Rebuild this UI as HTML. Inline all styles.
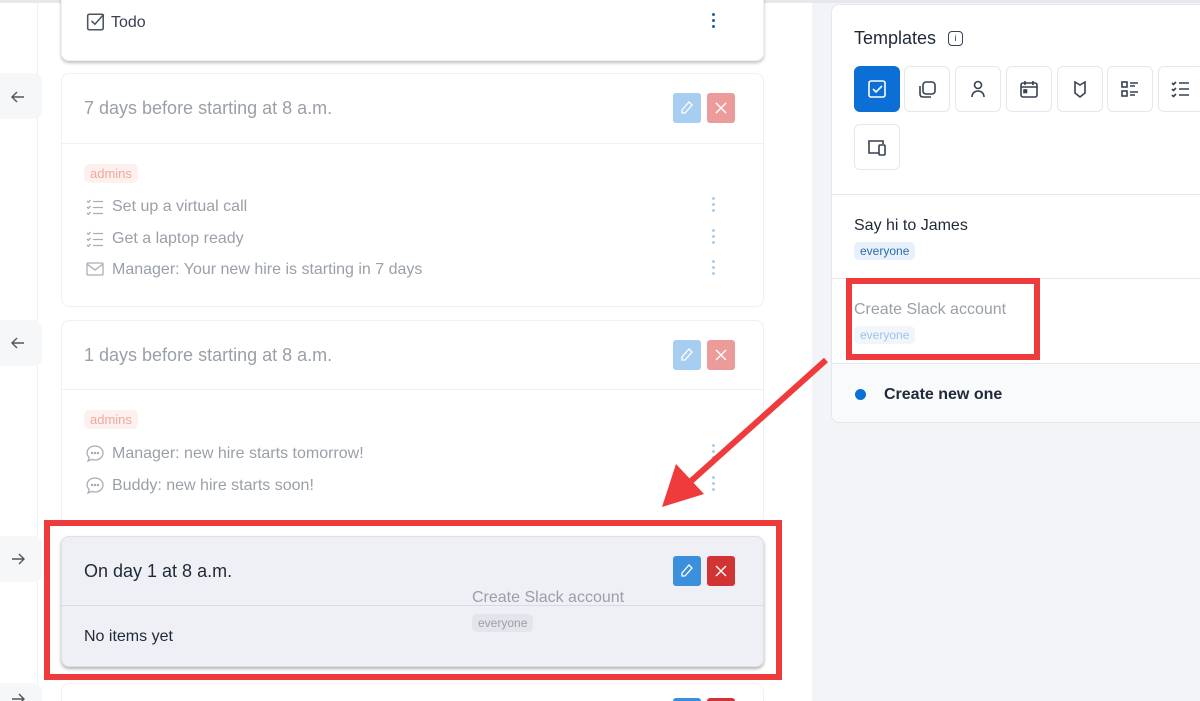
<!DOCTYPE html>
<html><head><meta charset="utf-8"><style>
*{box-sizing:border-box;margin:0;padding:0}
html,body{width:1200px;height:701px;overflow:hidden}
body{background:#fff;font-family:"Liberation Sans",sans-serif;position:relative;color:#1f2937}
.abs{position:absolute}
.card{position:absolute;left:61px;width:703px;background:#fff;border:1px solid #eef0f3;border-radius:8px}
.tab{position:absolute;left:0;width:42px;height:46px;background:#f6f7f9;border-radius:0 8px 8px 0}
.txt{position:absolute;font-size:16px}
.faded{color:#9aa0a8}
.dots{position:absolute;left:712px;width:4px}
.dots i{display:block;width:3px;height:3px;border-radius:50%;background:#a9cdea;margin-bottom:3px}
.btn{position:absolute;width:28px;height:30px;border-radius:3px}
.badge{position:absolute;font-size:13px;padding:2px 6px;border-radius:5px}
.ib{position:absolute;width:46px;height:46px;border:1px solid #e5e7eb;border-radius:6px;background:#fff;display:flex;align-items:center;justify-content:center}
.ico{position:absolute}
</style></head><body>
<svg width="0" height="0" style="position:absolute">
<defs>
<g id="la"><path d="M15 9H3M8 4L3 9l5 5" fill="none" stroke="#555" stroke-width="1.4"/></g>
<g id="ra"><path d="M3 9h12M10 4l5 5-5 5" fill="none" stroke="#555" stroke-width="1.4"/></g>
<g id="cl" fill="none" stroke="#a9aeb5" stroke-width="1.3"><path d="M1 3l1.3 1.3L4.5 2M1 9l1.3 1.3L4.5 8M1 15l1.3 1.3L4.5 14M7 3.5h10M7 9.5h10M7 15.5h10"/></g>
<g id="ml" fill="none" stroke="#a9aeb5" stroke-width="1.3"><rect x="1" y="3" width="16" height="12" rx="1"/><path d="M1 4l8 6 8-6"/></g>
<g id="ch" fill="none" stroke="#a9aeb5" stroke-width="1.3"><path d="M9 2c4.5 0 8 3 8 7s-3.5 7-8 7c-1.2 0-2.3-.2-3.3-.6L2 17l1.2-3.4C2 12.3 1 10.7 1 9c0-4 3.5-7 8-7z"/><circle cx="6" cy="9" r=".6" fill="#a9aeb5"/><circle cx="9" cy="9" r=".6" fill="#a9aeb5"/><circle cx="12" cy="9" r=".6" fill="#a9aeb5"/></g>
<g id="pen" fill="none" stroke="#fff" stroke-width="1.3"><path d="M10 2l3 3-7 8H3v-3z"/></g>
<g id="x" fill="none" stroke="#fff" stroke-width="1.4"><path d="M3 3l10 10M13 3L3 13"/></g>
</defs></svg>
<div class="abs" style="left:0;top:0;width:1200px;height:3px;background:#e6e8ec"></div>
<div class="abs" style="left:37px;top:3px;width:1px;height:698px;background:#f0f1f4"></div>
<div class="abs" style="left:812px;top:3px;width:388px;height:698px;background:#f3f4f8"></div>

<!-- card 1 -->
<div class="card" style="top:-10px;height:71px;box-shadow:0 2px 3px rgba(0,0,0,.25)"></div>
<svg class="abs" style="left:86px;top:12px" width="20" height="20" viewBox="0 0 18 18" fill="none" stroke="#4b5563" stroke-width="1.4"><rect x="1.5" y="2" width="14" height="14" rx="1.5"/><path d="M5 8l3 3 8-9"/></svg>
<div class="txt" style="left:111px;top:14px;color:#374151">Todo</div>
<div class="dots" style="top:13px"><i style="background:#1e5fa8"></i><i style="background:#1e5fa8"></i><i style="background:#1e5fa8"></i></div>

<!-- card 2 -->
<div class="tab" style="top:73px"></div>
<svg class="ico" style="left:9px;top:88px" width="18" height="18"><use href="#la"/></svg>
<div class="card" style="top:73px;height:234px"></div>
<div class="abs" style="left:61px;top:143px;width:703px;height:1px;background:#eef0f3"></div>
<div class="txt faded" style="left:84px;top:98px;font-size:18px">7 days before starting at 8 a.m.</div>
<div class="btn" style="left:673px;top:93px;background:#a7cdf0"></div>
<div class="btn" style="left:707px;top:93px;background:#ec9b9b"></div>
<svg class="ico" style="left:679px;top:100px" width="16" height="16"><use href="#pen"/></svg>
<svg class="ico" style="left:713px;top:100px" width="16" height="16"><use href="#x"/></svg>
<div class="badge" style="left:84px;top:164px;background:#fdf1ef;color:#f0a899">admins</div>
<svg class="ico" style="left:86px;top:198px" width="18" height="18"><use href="#cl"/></svg>
<svg class="ico" style="left:86px;top:230px" width="18" height="18"><use href="#cl"/></svg>
<svg class="ico" style="left:86px;top:260px" width="18" height="18"><use href="#ml"/></svg>
<div class="txt faded" style="left:112px;top:198px">Set up a virtual call</div>
<div class="txt faded" style="left:112px;top:230px">Get a laptop ready</div>
<div class="txt faded" style="left:112px;top:261px">Manager: Your new hire is starting in 7 days</div>
<div class="dots" style="top:197px"><i></i><i></i><i></i></div>
<div class="dots" style="top:229px"><i></i><i></i><i></i></div>
<div class="dots" style="top:260px"><i></i><i></i><i></i></div>

<!-- card 3 -->
<div class="tab" style="top:320px"></div>
<svg class="ico" style="left:9px;top:334px" width="18" height="18"><use href="#la"/></svg>
<div class="card" style="top:320px;height:205px"></div>
<div class="abs" style="left:61px;top:389px;width:703px;height:1px;background:#eef0f3"></div>
<div class="txt faded" style="left:84px;top:345px;font-size:18px">1 days before starting at 8 a.m.</div>
<div class="btn" style="left:673px;top:340px;background:#a7cdf0"></div>
<div class="btn" style="left:707px;top:340px;background:#ec9b9b"></div>
<svg class="ico" style="left:679px;top:347px" width="16" height="16"><use href="#pen"/></svg>
<svg class="ico" style="left:713px;top:347px" width="16" height="16"><use href="#x"/></svg>
<div class="badge" style="left:84px;top:410px;background:#fdf1ef;color:#f0a899">admins</div>
<svg class="ico" style="left:86px;top:444px" width="18" height="18"><use href="#ch"/></svg>
<svg class="ico" style="left:86px;top:476px" width="18" height="18"><use href="#ch"/></svg>
<div class="txt faded" style="left:112px;top:445px">Manager: new hire starts tomorrow!</div>
<div class="txt faded" style="left:112px;top:477px">Buddy: new hire starts soon!</div>
<div class="dots" style="top:444px"><i></i><i></i><i></i></div>
<div class="dots" style="top:476px"><i></i><i></i><i></i></div>

<!-- red box + card 4 -->
<div class="abs" style="left:44px;top:520px;width:738px;height:160px;border:6px solid #ef3b3b;background:#fff"></div>
<div class="tab" style="top:536px"></div>
<svg class="ico" style="left:9px;top:550px" width="18" height="18"><use href="#ra"/></svg>
<div class="card" style="top:536px;height:131px;background:#eef0f5;border-color:#dde0e6;box-shadow:0 2px 3px rgba(0,0,0,.3)"></div>
<div class="abs" style="left:61px;top:605px;width:703px;height:1px;background:#d8dce2"></div>
<div class="txt" style="left:84px;top:561px;font-size:18px;color:#1f2937">On day 1 at 8 a.m.</div>
<div class="btn" style="left:673px;top:556px;background:#3b8fdc"></div>
<div class="btn" style="left:707px;top:556px;background:#d23434"></div>
<svg class="ico" style="left:679px;top:563px" width="16" height="16"><use href="#pen"/></svg>
<svg class="ico" style="left:713px;top:563px" width="16" height="16"><use href="#x"/></svg>
<div class="txt" style="left:84px;top:628px;color:#1f2937">No items yet</div>
<div class="txt" style="left:472px;top:589px;color:#9aa0a8">Create Slack account</div>
<div class="badge" style="left:472px;top:614px;background:#e3e5ea;color:#9aa0a8;font-size:12px">everyone</div>

<div class="tab" style="top:683px"></div>
<svg class="ico" style="left:9px;top:690px" width="18" height="18"><use href="#ra"/></svg>
<div class="card" style="top:683px;height:40px"></div>
<div class="btn" style="left:673px;top:698px;background:#3b8fdc"></div>
<div class="btn" style="left:707px;top:698px;background:#d23434"></div>

<!-- right card -->
<div class="abs" style="left:831px;top:4px;width:380px;height:419px;background:#fff;border:1px solid #e5e7eb;border-radius:8px;overflow:hidden">
 <div class="abs" style="left:0;top:358px;width:380px;height:61px;background:#f9fafb;border-top:1px solid #e5e7eb"></div>
</div>
<div class="txt" style="left:854px;top:28px;font-size:18px;color:#1f2937">Templates</div>
<div class="abs" style="left:948px;top:31px;width:15px;height:15px;border:1.5px solid #374151;border-radius:4px;font-size:9px;text-align:center;line-height:12px;color:#374151">i</div>
<div class="ib" style="left:854px;top:66px;background:#0b6fd6;border-color:#0b6fd6"><svg width="22" height="22" fill="none" stroke="#fff" stroke-width="1.6"><rect x="3" y="3" width="16" height="16" rx="2"/><path d="M7 11l3 3 6-6"/></svg></div>
<div class="ib" style="left:904px;top:66px"><svg width="22" height="22" fill="none" stroke="#374151" stroke-width="1.6"><rect x="7" y="4" width="12" height="12" rx="3"/><path d="M4 8v8c0 2 1 3 3 3h8"/></svg></div>
<div class="ib" style="left:955px;top:66px"><svg width="22" height="22" fill="none" stroke="#374151" stroke-width="1.6"><circle cx="11" cy="7" r="3.5"/><path d="M5 19c0-4 3-6 6-6s6 2 6 6"/></svg></div>
<div class="ib" style="left:1006px;top:66px"><svg width="22" height="22" fill="none" stroke="#374151" stroke-width="1.6"><rect x="3" y="5" width="16" height="14" rx="2"/><path d="M3 9h16M7 3v4M15 3v4"/><rect x="6" y="12" width="2.5" height="2.5" fill="#374151"/></svg></div>
<div class="ib" style="left:1057px;top:66px"><svg width="22" height="22" fill="none" stroke="#374151" stroke-width="1.6"><path d="M6 4v11l5 4 5-4V4l-5 3z"/></svg></div>
<div class="ib" style="left:1107px;top:66px"><svg width="22" height="22" fill="none" stroke="#374151" stroke-width="1.6"><rect x="3" y="4" width="5" height="5"/><rect x="3" y="13" width="5" height="5"/><path d="M11 5h8M11 8h5M11 14h8M11 17h5"/></svg></div>
<div class="ib" style="left:1158px;top:66px"><svg width="22" height="22" fill="none" stroke="#374151" stroke-width="1.6"><path d="M2 5l1.5 1.5L6 4M2 11l1.5 1.5L6 10M2 17l1.5 1.5L6 16M9 5h10M9 11h10M9 17h10"/></svg></div>
<div class="ib" style="left:854px;top:124px"><svg width="22" height="22" fill="none" stroke="#374151" stroke-width="1.6"><path d="M13 17H3V5h14v3"/><rect x="13" y="9" width="6" height="10" rx="1"/></svg></div>
<div class="abs" style="left:832px;top:194px;width:370px;height:1px;background:#e5e7eb"></div>
<div class="txt" style="left:854px;top:217px;color:#1f2937">Say hi to James</div>
<div class="badge" style="left:854px;top:242px;background:#e8f1fb;color:#2b6cb0;font-size:12px">everyone</div>
<div class="abs" style="left:832px;top:278px;width:370px;height:1px;background:#e5e7eb"></div>
<div class="abs" style="left:846px;top:278px;width:194px;height:82px;border:6px solid #ef3b3b;background:#fff"></div>
<div class="txt" style="left:854px;top:301px;color:#9aa0a8">Create Slack account</div>
<div class="badge" style="left:854px;top:326px;background:#f2f6fb;color:#9cc3ea;font-size:12px">everyone</div>
<div class="abs" style="left:855px;top:389px;width:11px;height:11px;border-radius:50%;background:#0b6fd6"></div>
<div class="txt" style="left:884px;top:386px;font-weight:bold;color:#1f2937">Create new one</div>

<!-- arrow -->
<svg class="abs" style="left:0;top:0" width="1200" height="701"><line x1="826" y1="360" x2="690" y2="482" stroke="#ef3b3b" stroke-width="6"/><polygon points="662,507 676,464 704,494" fill="#ef3b3b"/></svg>
</body></html>
